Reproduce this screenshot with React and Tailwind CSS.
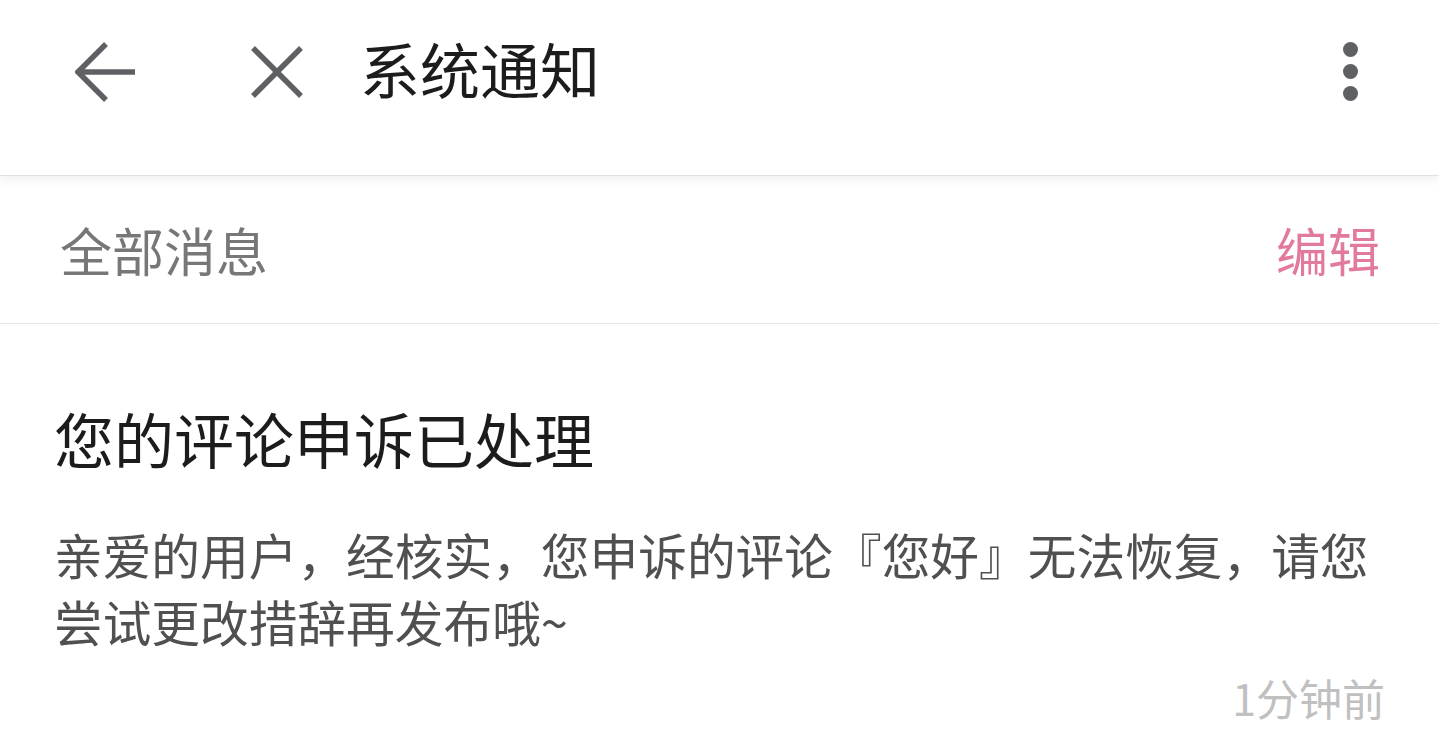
import React from 'react';

const font = { fontFamily: '"Noto Sans CJK SC", "Noto Sans", sans-serif' };

const BackIcon = () => (
  <svg width="62" height="60" viewBox="0 0 62 60" fill="none" stroke="#5f6063" strokeWidth="5.5" strokeLinecap="butt">
    <path d="M60 30H4" />
    <path d="M31 2L3 30l28 28" />
  </svg>
);

const CloseIcon = () => (
  <svg width="52" height="52" viewBox="0 0 52 52" fill="none" stroke="#5f6063" strokeWidth="5.5">
    <path d="M2 2l48 48M50 2L2 50" />
  </svg>
);

const MoreIcon = () => (
  <div className="flex flex-col items-center gap-[7px]">
    <span className="w-[15px] h-[15px] rounded-full bg-[#5f6063]"></span>
    <span className="w-[15px] h-[15px] rounded-full bg-[#5f6063]"></span>
    <span className="w-[15px] h-[15px] rounded-full bg-[#5f6063]"></span>
  </div>
);

export default function App() {
  return (
    <div className="w-[1439px] h-[737px] bg-white overflow-hidden" style={font}>
      {/* top bar */}
      <header className="relative z-10 h-[176px] pb-[32px] flex items-center pl-[75px] pr-[81px] bg-white border-b border-[#e2e2e2] shadow-[0_3px_10px_rgba(0,0,0,0.07)]">
        <button className="flex items-center">
          <BackIcon />
        </button>
        <button className="ml-[114px] flex items-center">
          <CloseIcon />
        </button>
        <h1 className="ml-[57px] mb-[8px] text-[60px] leading-none text-[#1c1c1c]">系统通知</h1>
        <button className="ml-auto">
          <MoreIcon />
        </button>
      </header>

      {/* filter row */}
      <div className="h-[148px] flex items-center justify-between pl-[60px] pr-[59px] border-b border-[#e4e4e4]">
        <span className="text-[52px] leading-none text-[#777777]">全部消息</span>
        <span className="text-[52px] leading-none text-[#e27a9e]">编辑</span>
      </div>

      {/* notification */}
      <div className="pl-[54px] pr-[54px] pt-[84px]">
        <h2 className="text-[60px] leading-none text-[#1c1c1c]">您的评论申诉已处理</h2>
        <p className="mt-[53px] text-[48.7px] leading-[67px] text-[#505050]">
          亲爱的用户，经核实，您申诉的评论『您好』无法恢复，请您尝试更改措辞再发布哦~
        </p>
        <div className="mt-[21px] text-right text-[43px] leading-none text-[#c0c0c0]">1分钟前</div>
      </div>
    </div>
  );
}
